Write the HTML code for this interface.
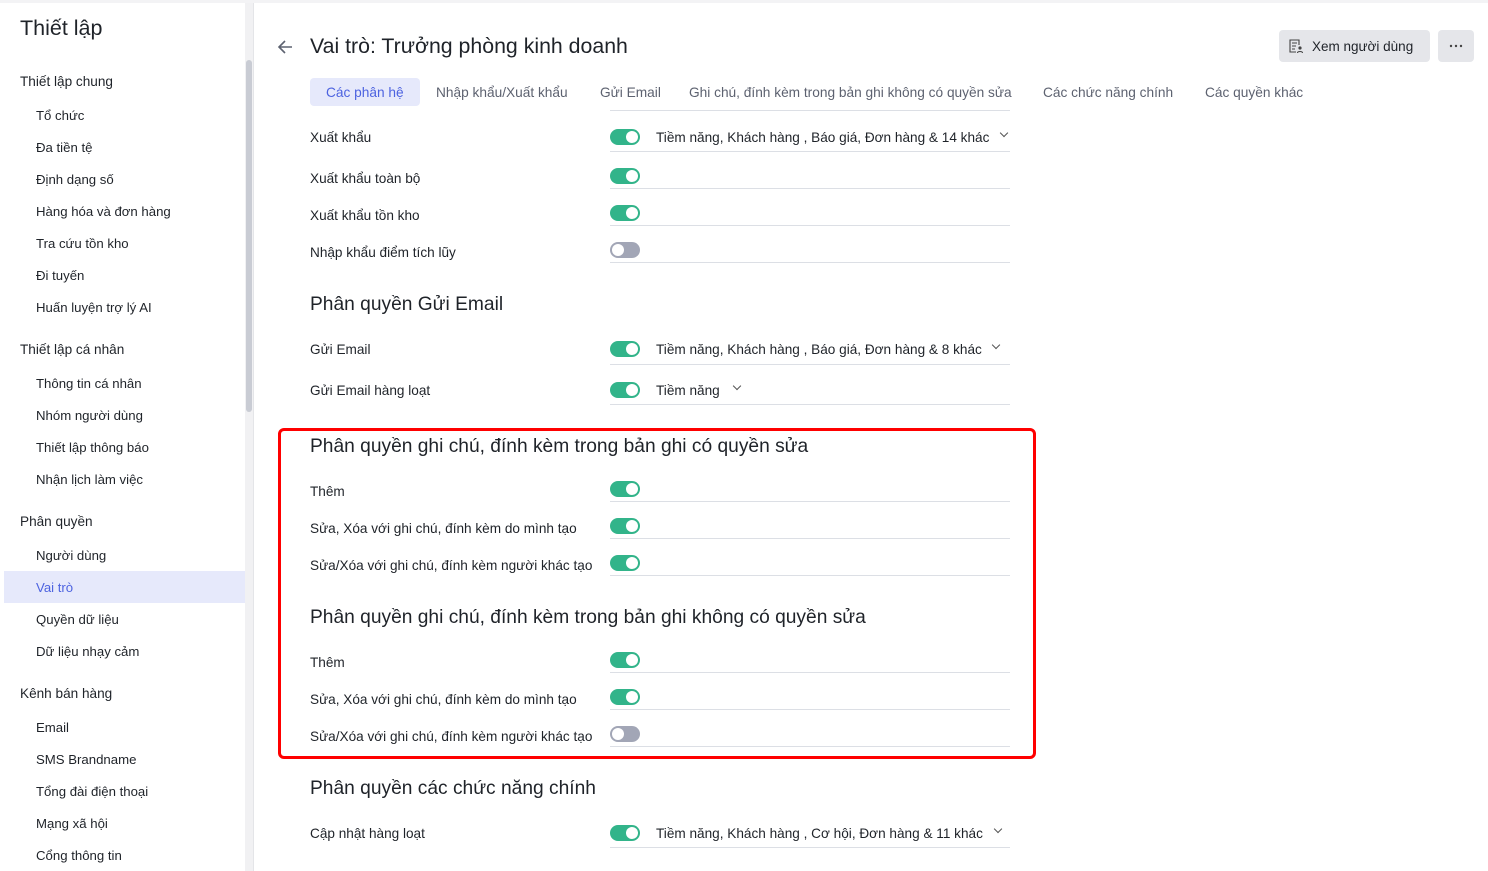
<!DOCTYPE html>
<html><head><meta charset="utf-8">
<style>
*{margin:0;padding:0;box-sizing:border-box}
body{width:1488px;height:871px;overflow:hidden;background:#fff;font-family:"Liberation Sans",sans-serif;color:#1f2329;position:relative}
.a{position:absolute;white-space:nowrap}
.sb{position:absolute;left:4px;top:3px;width:241px;height:868px;background:#fff}
.sbt{position:absolute;left:245px;top:3px;width:8px;height:868px;background:#f1f1f3}
.thumb{position:absolute;left:246px;top:60px;width:6px;height:352px;background:#c9ccd4;border-radius:3px}
.g{font-size:13.6px;left:20px}
.i{font-size:13.2px;left:36px}
.lab{font-size:13.6px;left:310px}
.h{font-size:19.2px;left:310px}
.tg{position:absolute;left:610px;width:30px;height:16px;border-radius:8px;background:#32b48a}
.tg::after{content:"";position:absolute;right:2px;top:2px;width:12px;height:12px;border-radius:50%;background:#fff}
.tg.off{background:#a2a6b6}
.tg.off::after{left:2px;right:auto}
.ln{position:absolute;left:610px;width:400px;height:1px;background:#dcdfe5}
.val{font-size:13.6px;left:656px}
.chev{position:absolute;width:6px;height:6px;border-right:1.2px solid #555;border-bottom:1.2px solid #555;transform:rotate(45deg)}
.tab{font-size:13.7px;color:#5d6270;top:85px}
</style></head><body>
<div style="position:absolute;left:0;top:0;width:1488px;height:3px;background:#f3f3f5"></div>
<div class="sb"></div><div class="sbt"></div><div class="thumb"></div>
<div style="position:absolute;left:253px;top:3px;width:1px;height:868px;background:#e4e5e8"></div>
<div class="a" style="left:20px;top:16px;font-size:21.5px">Thiết lập</div>
<div class="a g" style="top:74px">Thiết lập chung</div>
<div class="a i" style="top:108px">Tổ chức</div>
<div class="a i" style="top:140px">Đa tiền tệ</div>
<div class="a i" style="top:172px">Định dạng số</div>
<div class="a i" style="top:204px">Hàng hóa và đơn hàng</div>
<div class="a i" style="top:236px">Tra cứu tồn kho</div>
<div class="a i" style="top:268px">Đi tuyến</div>
<div class="a i" style="top:300px">Huấn luyện trợ lý AI</div>
<div class="a g" style="top:342px">Thiết lập cá nhân</div>
<div class="a i" style="top:376px">Thông tin cá nhân</div>
<div class="a i" style="top:408px">Nhóm người dùng</div>
<div class="a i" style="top:440px">Thiết lập thông báo</div>
<div class="a i" style="top:472px">Nhận lịch làm việc</div>
<div class="a g" style="top:514px">Phân quyền</div>
<div class="a i" style="top:548px">Người dùng</div>
<div style="position:absolute;left:4px;top:571px;width:241px;height:32px;background:#e6e9fb"></div>
<div class="a i" style="top:580px;color:#4d63e0">Vai trò</div>
<div class="a i" style="top:612px">Quyền dữ liệu</div>
<div class="a i" style="top:644px">Dữ liệu nhạy cảm</div>
<div class="a g" style="top:686px">Kênh bán hàng</div>
<div class="a i" style="top:720px">Email</div>
<div class="a i" style="top:752px">SMS Brandname</div>
<div class="a i" style="top:784px">Tổng đài điện thoại</div>
<div class="a i" style="top:816px">Mạng xã hội</div>
<div class="a i" style="top:848px">Cổng thông tin</div>

<svg class="a" style="left:276px;top:38px" width="18" height="18" viewBox="0 0 18 18"><path d="M16 9H3M9 3L3 9l6 6" fill="none" stroke="#5d6270" stroke-width="1.6"/></svg>
<div class="a" style="left:310px;top:34px;font-size:21.3px">Vai trò: Trưởng phòng kinh doanh</div>
<div style="position:absolute;left:1279px;top:30px;width:151px;height:32px;background:#e5e6ea;border-radius:4px"></div>
<svg class="a" style="left:1288px;top:38px" width="16" height="16" viewBox="0 0 16 16"><path d="M11 7V2H2v12h6M4 5h5M4 8h4M4 11h3" fill="none" stroke="#444" stroke-width="1.1"/><circle cx="12" cy="10" r="1.6" fill="#444"/><path d="M9.5 15c0-2 5-2 5 0" fill="none" stroke="#444" stroke-width="1.1"/></svg>
<div class="a" style="left:1312px;top:39px;font-size:13.5px">Xem người dùng</div>
<div style="position:absolute;left:1438px;top:30px;width:36px;height:32px;background:#e5e6ea;border-radius:4px"></div>
<svg class="a" style="left:1438px;top:30px" width="36" height="32"><circle cx="13" cy="16" r="1.2" fill="#444"/><circle cx="18" cy="16" r="1.2" fill="#444"/><circle cx="23" cy="16" r="1.2" fill="#444"/></svg>

<div style="position:absolute;left:310px;top:78px;width:110px;height:28px;background:#e6e9fb;border-radius:4px"></div>
<div class="a tab" style="left:326px;color:#4d63e0">Các phân hệ</div>
<div class="a tab" style="left:436px">Nhập khẩu/Xuất khẩu</div>
<div class="a tab" style="left:600px">Gửi Email</div>
<div class="a tab" style="left:689px">Ghi chú, đính kèm trong bản ghi không có quyền sửa</div>
<div class="a tab" style="left:1043px">Các chức năng chính</div>
<div class="a tab" style="left:1205px">Các quyền khác</div>
<div style="position:absolute;left:610px;top:110px;width:400px;height:1px;background:#dcdfe5"></div>

<div class="a lab" style="top:130px">Xuất khẩu</div><div class="tg" style="top:129px"></div>
<div class="a val" style="top:130px">Tiềm năng, Khách hàng , Báo giá, Đơn hàng &amp; 14 khác</div><div class="chev" style="left:1001px;top:130px"></div>
<div class="ln" style="top:151px"></div>
<div class="a lab" style="top:171px">Xuất khẩu toàn bộ</div><div class="tg" style="top:168px"></div><div class="ln" style="top:188px"></div>
<div class="a lab" style="top:208px">Xuất khẩu tồn kho</div><div class="tg" style="top:205px"></div><div class="ln" style="top:225px"></div>
<div class="a lab" style="top:245px">Nhập khẩu điểm tích lũy</div><div class="tg off" style="top:242px"></div><div class="ln" style="top:262px"></div>

<div class="a h" style="top:294px">Phân quyền Gửi Email</div>
<div class="a lab" style="top:342px">Gửi Email</div><div class="tg" style="top:341px"></div>
<div class="a val" style="top:342px">Tiềm năng, Khách hàng , Báo giá, Đơn hàng &amp; 8 khác</div><div class="chev" style="left:993px;top:342px"></div>
<div class="ln" style="top:364px"></div>
<div class="a lab" style="top:383px">Gửi Email hàng loạt</div><div class="tg" style="top:382px"></div>
<div class="a val" style="top:383px">Tiềm năng</div><div class="chev" style="left:734px;top:383px"></div>
<div class="ln" style="top:404px"></div>

<div style="position:absolute;left:278px;top:428px;width:758px;height:331px;border:3px solid #f00;border-radius:6px"></div>
<div class="a h" style="top:436px">Phân quyền ghi chú, đính kèm trong bản ghi có quyền sửa</div>
<div class="a lab" style="top:484px">Thêm</div><div class="tg" style="top:481px"></div><div class="ln" style="top:501px"></div>
<div class="a lab" style="top:521px">Sửa, Xóa với ghi chú, đính kèm do mình tạo</div><div class="tg" style="top:518px"></div><div class="ln" style="top:538px"></div>
<div class="a lab" style="top:558px">Sửa/Xóa với ghi chú, đính kèm người khác tạo</div><div class="tg" style="top:555px"></div><div class="ln" style="top:575px"></div>
<div class="a h" style="top:607px">Phân quyền ghi chú, đính kèm trong bản ghi không có quyền sửa</div>
<div class="a lab" style="top:655px">Thêm</div><div class="tg" style="top:652px"></div><div class="ln" style="top:672px"></div>
<div class="a lab" style="top:692px">Sửa, Xóa với ghi chú, đính kèm do mình tạo</div><div class="tg" style="top:689px"></div><div class="ln" style="top:709px"></div>
<div class="a lab" style="top:729px">Sửa/Xóa với ghi chú, đính kèm người khác tạo</div><div class="tg off" style="top:726px"></div><div class="ln" style="top:746px"></div>

<div class="a h" style="top:778px">Phân quyền các chức năng chính</div>
<div class="a lab" style="top:826px">Cập nhật hàng loạt</div><div class="tg" style="top:825px"></div>
<div class="a val" style="top:826px">Tiềm năng, Khách hàng , Cơ hội, Đơn hàng &amp; 11 khác</div><div class="chev" style="left:995px;top:826px"></div>
<div class="ln" style="top:847px"></div>
</body></html>
